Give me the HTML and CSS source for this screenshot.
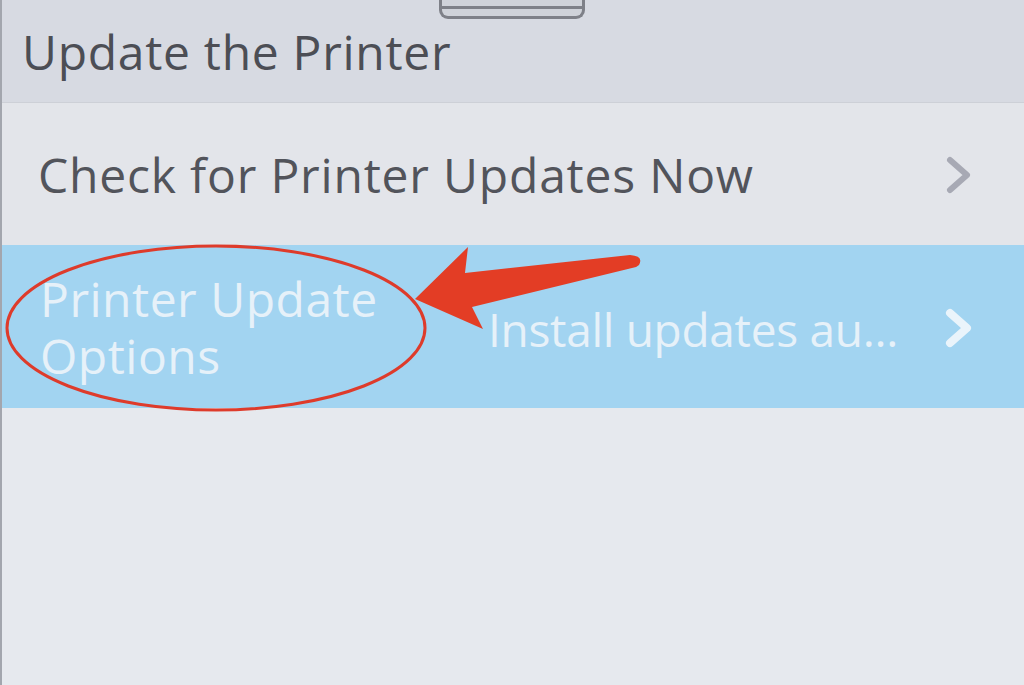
FILE: index.html
```html
<!DOCTYPE html>
<html lang="en">
<head>
    <meta charset="UTF-8">
    <meta name="viewport" content="width=device-width, initial-scale=1.0">
    <title>Update the Printer</title>
    <link rel="stylesheet" href="styles.css">
</head>
<body>
    <div class="screen">
        <!-- pull-down handle at the top of the panel -->
        <div class="handle"></div>

        <header class="title-bar">
            <h1>Update the Printer</h1>
        </header>

        <ul class="menu">
            <li class="item">
                <span class="label">Check for Printer Updates Now</span>
                <svg class="chevron" viewBox="0 0 30 40" width="30" height="40">
                    <polyline points="6,5 23,20 6,35" />
                </svg>
            </li>
            <li class="item selected">
                <span class="label">Printer Update Options</span>
                <span class="value">Install updates au...</span>
                <svg class="chevron" viewBox="0 0 30 40" width="30" height="40">
                    <polyline points="6,5 23,20 6,35" />
                </svg>
            </li>
        </ul>

        <div class="empty"></div>

        <!-- red markup drawn over the screen -->
        <svg class="markup" viewBox="0 0 1024 685" width="1024" height="685">
            <ellipse cx="216" cy="328" rx="209" ry="82" />
            <path d="M415,299 L468,247 L465,273 L630,255 Q644,256 639,265 Q636,268 632,268 L472,307 L483,329 Z" />
        </svg>
    </div>
</body>
</html>
```

FILE: styles.css
```css
* {
    margin: 0;
    padding: 0;
    box-sizing: border-box;
    font-family: 'Open Sans', 'Noto Sans', sans-serif;
}

body {
    background: #e5e8ee;
    overflow: hidden;
}

.screen {
    position: relative;
    width: 1024px;
    height: 685px;
    display: flex;
    flex-direction: column;
    background: #e5e8ee;
    border-left: 2px solid #a3a6ae;
}

.handle {
    position: absolute;
    top: 0;
    left: 437px;
    width: 146px;
    height: 19px;
    border: 3px solid #7e8088;
    border-top: none;
    border-radius: 0 0 9px 9px;
    background: #cfd2d9;
}

.handle::after {
    content: "";
    position: absolute;
    left: 0;
    right: 0;
    top: 6px;
    height: 3px;
    background: #7e8088;
}

.title-bar {
    height: 103px;
    background: #d7dae2;
    padding: 24px 0 0 20px;
    border-bottom: 1px solid #cdd0d7;
}

h1 {
    font-size: 48px;
    font-weight: 500;
    color: #4c4e55;
    letter-spacing: 0.7px;
    line-height: 56px;
}

.menu {
    list-style: none;
}

.item {
    display: flex;
    align-items: center;
    height: 142px;
    padding: 0 50px 0 36px;
    background: #e3e5ea;
    color: #52545b;
    font-size: 48px;
    font-weight: 500;
    letter-spacing: 0.8px;
}

.item .label {
    flex: 1;
    line-height: 57px;
}

.item.selected {
    height: 163px;
    background: #a2d4f1;
    color: #e6f1f9;
    padding-left: 38px;
}

.item.selected .label {
    flex: none;
    width: 420px;
    letter-spacing: 0.5px;
}

.value {
    flex: 1;
    text-align: right;
    font-size: 46px;
    letter-spacing: -0.3px;
    padding-right: 46px;
    padding-top: 4px;
}

.chevron {
    flex: none;
    margin-top: 2px;
}

.chevron polyline {
    fill: none;
    stroke: #a7a9b4;
    stroke-width: 6;
    stroke-linecap: round;
    stroke-linejoin: round;
}

.selected .chevron polyline {
    stroke: #eaf4fb;
    stroke-width: 8;
}

.empty {
    flex: 1;
    background: #e6e9ee;
}

.markup {
    position: absolute;
    top: 0;
    left: -2px;
}

.markup ellipse {
    fill: none;
    stroke: #de3b2b;
    stroke-width: 3;
}

.markup path {
    fill: #e33d25;
}
```
